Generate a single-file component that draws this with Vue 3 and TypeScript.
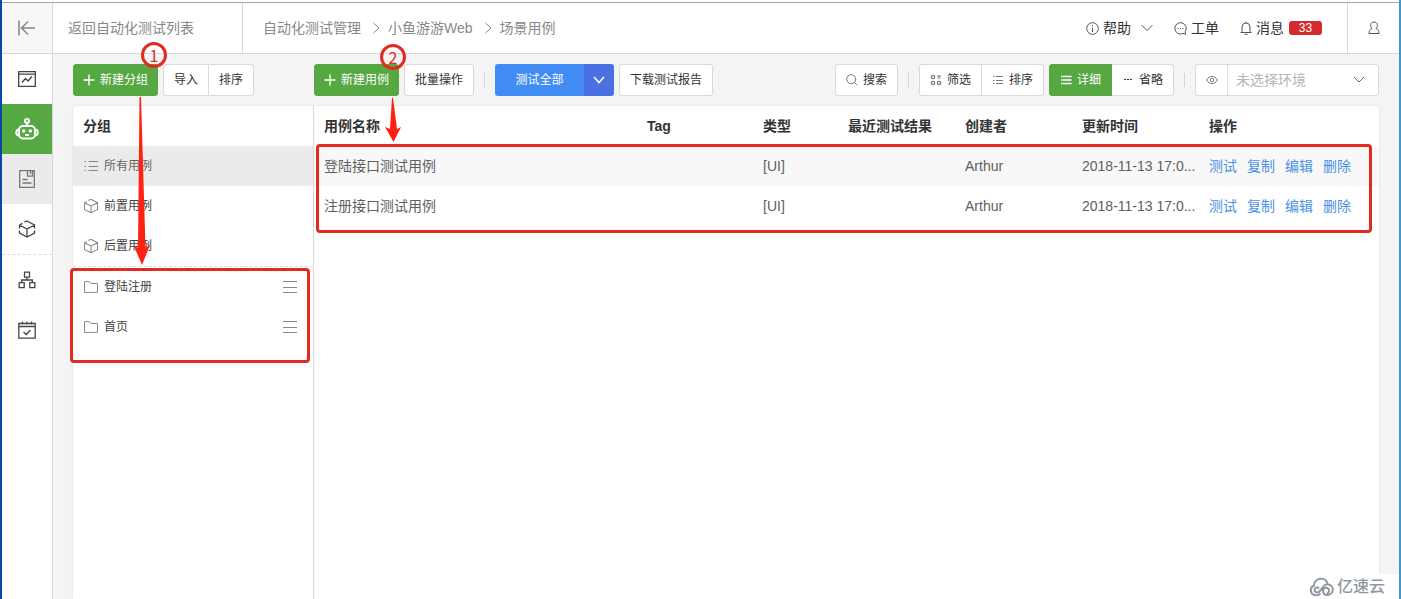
<script setup lang="ts">
import { ref } from 'vue'

interface CaseRow {
  name: string
  tag: string
  type: string
  result: string
  author: string
  updated: string
}

const crumbs: string[] = ['自动化测试管理', '小鱼游游Web', '场景用例']
const headers: string[] = ['用例名称', 'Tag', '类型', '最近测试结果', '创建者', '更新时间', '操作']
const actions: string[] = ['测试', '复制', '编辑', '删除']
const rows: CaseRow[] = [
  { name: '登陆接口测试用例', tag: '', type: '[UI]', result: '', author: 'Arthur', updated: '2018-11-13 17:0...' },
  { name: '注册接口测试用例', tag: '', type: '[UI]', result: '', author: 'Arthur', updated: '2018-11-13 17:0...' }
]
const presets: string[] = ['前置用例', '后置用例']
const folders: string[] = ['登陆注册', '首页']
const environment = ref('')
</script>

<template>
  <div class="window">
    <header class="topbar">
      <button class="collapse" aria-label="收起">
        <svg width="20" height="18" viewBox="0 0 20 18" class="ico thick"><path d="M2 1.500v15M18 9H5M11 2.500 4.500 9l6.500 6.500" /></svg>
      </button>
      <a class="back" href="#">返回自动化测试列表</a>
      <nav class="crumbs">
        <template v-for="(c, i) in crumbs" :key="c">
          <svg v-if="i > 0" width="7" height="12" viewBox="0 0 7 12" class="ico"><path d="M.5 1 6 6 .5 11" /></svg>
          <a href="#">{{ c }}</a>
        </template>
      </nav>
      <div class="tools">
        <a href="#" class="tool">
          <svg width="13" height="13" viewBox="0 0 13 13" class="ico"><circle cx="6.500" cy="6.500" r="5.800" /><path d="M6.500 5.500v4.500M6.500 3v1.200" /></svg>
          帮助
          <svg width="12" height="8" viewBox="0 0 12 8" class="ico down"><path d="M.5 1 6 6.500 11.500 1" /></svg>
        </a>
        <a href="#" class="tool">
          <svg width="13" height="13" viewBox="0 0 13 13" class="ico"><path d="M9 11.500A5.700 5.700 0 1 1 11.300 9.500L11.500 12.300z" /><path d="M3.500 6.500h1M6 6.500h1M8.500 6.500h1" /></svg>
          工单
        </a>
        <a href="#" class="tool">
          <svg width="12" height="14" viewBox="0 0 12 14" class="ico"><path d="M.5 11.500h11M2 11.500V6a4 4 0 0 1 8 0v5.500M6 2V.5M4.500 13.300h3" /></svg>
          消息
          <span class="badge">33</span>
        </a>
      </div>
      <button class="user" aria-label="用户">
        <svg width="12" height="14" viewBox="0 0 12 14" class="ico"><path d="M4 7.500C1.800 5.500 2.200 1 6 1s4.200 4.500 2 6.500c2.200.6 3 2.500 3 5H1c0-2.500.8-4.400 3-5z" /></svg>
      </button>
    </header>

    <div class="body">
      <nav class="rail">
        <a href="#" aria-label="报告"><svg width="18" height="16" viewBox="0 0 18 16" class="ico"><path d="M.7.700h16.600v14.600H.7zM.7 3.200h16.600M4 11.500l3.500-4 2.500 2.500 4-4.500" /></svg></a>
        <a href="#" class="active" aria-label="自动化测试">
          <svg width="24" height="22" viewBox="0 0 24 22" class="ico bot"><circle cx="12" cy="3" r="2" /><path d="M12 5v3" /><rect x="4" y="8" width="16" height="12.500" rx="4" /><path d="M3.500 11.500C.5 12 .5 17 3.500 17.500M20.500 11.500c3 .5 3 5.500 0 6M10 17h4" /><circle cx="8.700" cy="13" r=".8" /><circle cx="15.300" cy="13" r=".8" /></svg>
        </a>
        <a href="#" class="muted" aria-label="文档"><svg width="16" height="18" viewBox="0 0 16 18" class="ico"><path d="M.7.700h14.600v16.600H.7zM8.500.700v5.500h5V.7M11.500 1v3M3.500 9.500h5M3.500 13h9" /></svg></a>
        <a href="#" class="last" aria-label="模型"><svg width="18" height="18" viewBox="0 0 18 18" class="ico"><path d="M6.500 2.200 9 1l7.500 4M1.500 5l3-1.600M1.500 5v3.500M1.500 10.500V13L9 17l7.500-4v-2.500M16.500 8.500V5L9 9 1.500 5M9 9v8" /></svg></a>
        <a href="#" aria-label="结构"><svg width="18" height="18" viewBox="0 0 18 18" class="ico"><path d="M6.500 1.200h5v5h-5zM1.200 11.700h5v5h-5zM11.800 11.700h5v5h-5zM9 6.200V9M3.700 11.700V9h10.600v2.700" /></svg></a>
        <a href="#" aria-label="计划"><svg width="18" height="18" viewBox="0 0 18 18" class="ico"><path d="M.8 2.500h16.400v14.700H.8zM.8 5.500h16.400M4.500.500v3M9 .5v3M13.500.500v3M5.500 11l2.800 2.500L12.500 9" /></svg></a>
      </nav>

      <main class="main">
        <div class="toolbar">
          <div class="group-tools">
            <button class="btn green"><svg width="12" height="12" viewBox="0 0 12 12" class="ico plus"><path d="M6 .5v11M.5 6h11" /></svg>新建分组</button>
            <div class="join">
              <button class="btn">导入</button>
              <button class="btn">排序</button>
            </div>
          </div>
          <div class="case-tools">
            <button class="btn green"><svg width="12" height="12" viewBox="0 0 12 12" class="ico plus"><path d="M6 .5v11M.5 6h11" /></svg>新建用例</button>
            <button class="btn">批量操作</button>
            <i class="sep"></i>
            <div class="split">
              <button class="run">测试全部</button>
              <button class="more" aria-label="更多"><svg width="12" height="8" viewBox="0 0 12 8" class="ico thick"><path d="M1 1l5 5.500L11 1" /></svg></button>
            </div>
            <button class="btn">下载测试报告</button>
          </div>
          <div class="view-tools">
            <button class="btn"><svg width="12" height="12" viewBox="0 0 12 12" class="ico dim"><circle cx="5.200" cy="5.200" r="4.500" /><path d="M8.500 8.500l2.700 2.700" /></svg>搜索</button>
            <i class="sep"></i>
            <div class="join">
              <button class="btn"><svg width="12" height="12" viewBox="0 0 12 12" class="ico dim bold"><circle cx="3" cy="3" r="1.700" /><circle cx="3" cy="9" r="1.700" /><circle cx="9" cy="9" r="1.700" /><path d="M7.500 1.500l3 3M10.500 1.500l-3 3" /></svg>筛选</button>
              <button class="btn"><svg width="12" height="12" viewBox="0 0 12 12" class="ico dim"><path d="M1 2.500h1.500M1 6.500h1.500M1 9.500h1.500M4 2.500h7M4 6.500h7M4 9.500h7" /></svg>排序</button>
            </div>
            <div class="join">
              <button class="btn green"><svg width="12" height="12" viewBox="0 0 12 12" class="ico plus"><path d="M1 2.500h1.500M1 6h1.500M1 9.500h1.500M3 2.500h8.500M3 6h8.500M3 9.500h8.500" /></svg>详细</button>
              <button class="btn"><svg width="12" height="12" viewBox="0 0 12 12" class="ico"><path d="M2 5.500h2M5 5.500h2M8 5.500h2" /></svg>省略</button>
            </div>
            <i class="sep"></i>
            <div class="env">
              <button class="eye" aria-label="查看环境"><svg width="12" height="10" viewBox="0 0 12 10" class="ico dim"><path d="M.6 5C3 .2 9 .2 11.400 5 9 9.800 3 9.800.6 5z" /><circle cx="6" cy="5" r="1.700" /></svg></button>
              <select v-model="environment" aria-label="环境">
                <option value="">未选择环境</option>
              </select>
              <svg width="12" height="8" viewBox="0 0 12 8" class="ico arrow"><path d="M1 1l5 5 5-5" /></svg>
            </div>
          </div>
        </div>

        <div class="panel">
          <aside class="groups">
            <h2>分组</h2>
            <ul>
              <li class="current">
                <svg width="14" height="14" viewBox="0 0 14 14" class="ico"><path d="M.5 2.500H2M.5 7.500H2M.5 11.500H2M4.500 2.500H14M4.500 7.500H14M4.500 11.500H14" /></svg>所有用例
              </li>
              <li v-for="p in presets" :key="p">
                <svg width="14" height="14" viewBox="1 1 16 16" class="ico cube"><path d="M6 2.600 9 1.300l7.500 3.900M1.500 5.200l2.800-1.500M1.500 5.200V13L9 16.700l7.500-3.700V5.200L9 9 1.500 5.200M9 9v7.700" /></svg>{{ p }}
              </li>
            </ul>
            <ul class="folders">
              <li v-for="f in folders" :key="f">
                <svg width="14" height="12" viewBox="0 0 14 12" class="ico"><path d="M.5.600h5L7 2.500h6.500v8.900H.5z" /></svg>{{ f }}
                <button class="grip" :aria-label="f"><svg width="14" height="14" viewBox="0 0 14 14" class="ico"><path d="M0 1.500h14M0 7.500h14M0 12.500h14" /></svg></button>
              </li>
            </ul>
          </aside>

          <section class="cases">
            <table>
              <colgroup>
                <col /><col class="c-tag" /><col class="c-type" /><col class="c-result" /><col class="c-author" /><col class="c-time" /><col class="c-ops" />
              </colgroup>
              <thead>
                <tr><th v-for="h in headers" :key="h" scope="col">{{ h }}</th></tr>
              </thead>
              <tbody>
                <tr v-for="r in rows" :key="r.name">
                  <td>{{ r.name }}</td>
                  <td>{{ r.tag }}</td>
                  <td>{{ r.type }}</td>
                  <td>{{ r.result }}</td>
                  <td>{{ r.author }}</td>
                  <td class="time">{{ r.updated }}</td>
                  <td class="ops"><a v-for="a in actions" :key="a" href="#">{{ a }}</a></td>
                </tr>
              </tbody>
            </table>
          </section>
        </div>
      </main>
    </div>

    <div class="mark mark-groups"></div>
    <div class="mark mark-cases"></div>
    <svg class="pointer pointer-one" width="20" height="170" viewBox="0 0 20 170"><path d="M11.500 1h1.500L17.500 152l4.500-3-8 20L5.500 149l4.500 3z" /></svg>
    <svg class="pointer pointer-two" width="18" height="46" viewBox="0 0 18 46"><path d="M10 1h1l4 31 4-2-7.500 15L3 30l5 2z" /></svg>
    <span class="step step-one">1</span>
    <span class="step step-two">2</span>
    <div class="brand">
      <svg width="26" height="20" viewBox="0 0 26 20"><path d="M10 11.500a2.500 2.500 0 1 0-2 4c3 0 4-3 6-5.500 1.500-2 3.500-3 5.500-2.500a5.300 5.300 0 0 1-1 10.500c-2.500 0-4.500-1.500-4.500-4a3 3 0 1 1 4 2.500M11.500 16.500C9.500 18.500 7 18.500 5.500 18A5 5 0 0 1 5 8.500C5 0 17.500-.5 18.500 7" /></svg>
      亿速云
    </div>
  </div>
</template>

<style>
body {
  background: #fff;
}
</style>

<style scoped>
* {
  box-sizing: border-box;
}
.window {
  position: relative;
  display: flex;
  flex-direction: column;
  min-height: 100vh;
  padding-top: 2px;
  overflow: hidden;
  border-left: 2px solid #0a47a9;
  border-right: 2px solid #3b9bd0;
  background: #fff;
  color: #333;
  font: 14px/20px "Liberation Sans", "Noto Sans CJK SC", sans-serif;
}
a {
  color: inherit;
  text-decoration: none;
}
button,
select {
  margin: 0;
  padding: 0;
  border: 0;
  background: none;
  color: inherit;
  font: inherit;
}
.ico {
  flex: none;
  fill: none;
  stroke: currentColor;
  stroke-width: 1;
}
.thick {
  stroke-width: 1.6;
}
.plus {
  stroke-width: 1.4;
}
.bold {
  stroke-width: 1.2;
}
.dim {
  color: #777;
}

.topbar {
  display: flex;
  height: 52px;
  border-top: 1px solid #a5a5a5;
  border-bottom: 1px solid #d8d8d8;
  color: #888;
}
.collapse,
.user {
  display: flex;
  flex: none;
  align-items: center;
  justify-content: center;
}
.collapse {
  width: 51px;
  border-right: 1px solid #d8d8d8;
  background: #f7f7f7;
}
.back {
  display: flex;
  align-items: center;
  width: 190px;
  padding-left: 15px;
  border-right: 1px solid #d8d8d8;
}
.crumbs {
  display: flex;
  flex: 1;
  align-items: center;
  gap: 8px;
  padding-left: 20px;
}
.crumbs .ico {
  margin-left: 4px;
}
.tools {
  display: flex;
  align-items: center;
  gap: 21px;
  padding-right: 25px;
  color: #333;
}
.tool {
  display: flex;
  align-items: center;
  gap: 4px;
}
.tool .ico {
  color: #555;
}
.tool .down {
  margin-left: 6px;
}
.badge {
  width: 33px;
  margin-left: 1px;
  border-radius: 3px;
  background: #d32b30;
  color: #fff;
  font-size: 12px;
  line-height: 14px;
  text-align: center;
}
.user {
  width: 52px;
  border-left: 1px solid #d8d8d8;
  color: #555;
}

.body {
  display: flex;
  flex: 1;
}
.rail {
  flex: none;
  width: 51px;
  border-right: 1px solid #d8d8d8;
  background: #fff;
}
.rail a {
  display: flex;
  align-items: center;
  justify-content: center;
  height: 50px;
  color: #444;
}
.rail .ico {
  stroke-width: 1.3;
}
.rail .active {
  background: #56a843;
  color: #fff;
}
.rail .bot {
  stroke-width: 2;
}
.rail .muted {
  background: #ebebeb;
  color: #777;
}
.rail .last {
  height: 51px;
  border-bottom: 1px dashed #dcdcdc;
}

.main {
  display: flex;
  flex: 1;
  flex-direction: column;
  min-width: 0;
  padding: 0 20px;
  background: #f4f4f4;
}
.toolbar {
  display: flex;
  align-items: center;
  height: 52px;
  font-size: 12px;
}
.group-tools {
  display: flex;
  flex: none;
  gap: 5px;
  width: 241px;
}
.case-tools {
  display: flex;
  align-items: center;
  gap: 5px;
}
.view-tools {
  display: flex;
  align-items: center;
  gap: 5px;
  margin-left: auto;
}
.btn {
  display: flex;
  align-items: center;
  gap: 5px;
  height: 32px;
  padding: 0 10px;
  border: 1px solid #d9d9d9;
  border-radius: 3px;
  background: #fff;
  white-space: nowrap;
}
.btn.green {
  border-color: #56a843;
  background: #56a843;
  color: #fff;
}
.group-tools .green,
.case-tools .green {
  padding: 0 9px;
}
.join {
  display: flex;
}
.join .btn:first-child {
  border-top-right-radius: 0;
  border-bottom-right-radius: 0;
}
.join .btn + .btn {
  border-left: 0;
  border-top-left-radius: 0;
  border-bottom-left-radius: 0;
}
.sep {
  width: 1px;
  height: 14px;
  margin: 0 5px;
  background: #d5d5d5;
}
.split {
  display: flex;
  height: 32px;
  overflow: hidden;
  border-radius: 3px;
  color: #fff;
}
.run {
  width: 89px;
  background: #428cf5;
}
.more {
  display: flex;
  align-items: center;
  justify-content: center;
  width: 30px;
  background: #4a70e2;
}
.env {
  display: flex;
  align-items: center;
  width: 184px;
  height: 32px;
  border: 1px solid #d9d9d9;
  border-radius: 3px;
  background: #fff;
}
.eye {
  display: flex;
  align-items: center;
  justify-content: center;
  width: 32px;
  height: 30px;
  border-right: 1px solid #e0e0e0;
}
.env select {
  flex: 1;
  min-width: 0;
  padding-left: 8px;
  appearance: none;
  color: #b5b5b5;
  font-size: 14px;
}
.arrow {
  margin-right: 13px;
  color: #666;
  pointer-events: none;
}

.panel {
  display: flex;
  flex: 1;
  border-radius: 3px 3px 0 0;
  background: #fff;
  box-shadow: 0 0 2px #d0d0d0;
}
.groups {
  flex: none;
  width: 241px;
  border-right: 1px solid #d8d8d8;
  font-size: 12px;
}
h2 {
  margin: 0;
  padding-left: 10px;
  font-size: 14px;
  line-height: 40px;
}
ul {
  margin: 0;
  padding: 0;
  list-style: none;
}
li {
  display: flex;
  align-items: center;
  gap: 6px;
  height: 40px;
  padding: 0 16px 0 11px;
  color: #444;
}
li .ico {
  color: #888;
}
.cube {
  stroke-width: 1.2;
}
.current {
  background: #ebebeb;
  color: #666;
}
.folders {
  border-top: 1px dashed #dcdcdc;
}
.grip {
  display: flex;
  margin-left: auto;
}
.cases {
  flex: 1;
  min-width: 0;
}
table {
  width: 100%;
  table-layout: fixed;
  border-collapse: collapse;
}
.c-tag {
  width: 116px;
}
.c-type {
  width: 85px;
}
.c-result,
.c-author {
  width: 117px;
}
.c-time {
  width: 127px;
}
.c-ops {
  width: 180px;
}
th,
td {
  height: 40px;
  padding: 0 10px;
  text-align: left;
  white-space: nowrap;
}
td {
  color: #606060;
}
tbody tr:first-child {
  background: #f8f8f9;
}
.time {
  padding-right: 0;
}
.ops a {
  margin-right: 10px;
  color: #4a90e2;
}
.ops a:last-child {
  margin-right: 0;
}

.mark {
  position: absolute;
  border: 3px solid #e22b20;
  border-radius: 4px;
  pointer-events: none;
}
.mark-groups {
  top: 268px;
  left: 68px;
  width: 240px;
  height: 95px;
}
.mark-cases {
  top: 144px;
  right: 27px;
  left: 314px;
  height: 89px;
}
.pointer {
  position: absolute;
  overflow: visible;
  fill: #ff2213;
  pointer-events: none;
}
.pointer-one {
  top: 96px;
  left: 126px;
}
.pointer-two {
  top: 97px;
  left: 380px;
}
.step {
  position: absolute;
  width: 26px;
  height: 26px;
  border: 3px solid #e22b20;
  border-radius: 50%;
  color: #e22b20;
  font-family: "Noto Sans CJK SC", sans-serif;
  font-size: 16px;
  line-height: 20px;
  text-align: center;
}
.step-one {
  top: 42px;
  left: 139px;
}
.step-two {
  top: 44px;
  left: 378px;
}
.brand {
  position: absolute;
  right: -2px;
  bottom: 0;
  display: flex;
  align-items: center;
  gap: 2px;
  height: 25px;
  padding-right: 16px;
  padding-left: 4px;
  background: #fff;
  color: #9097a3;
  font-size: 16px;
  font-weight: 500;
}
.brand svg {
  fill: none;
  stroke: currentColor;
  stroke-width: 2;
}
</style>
